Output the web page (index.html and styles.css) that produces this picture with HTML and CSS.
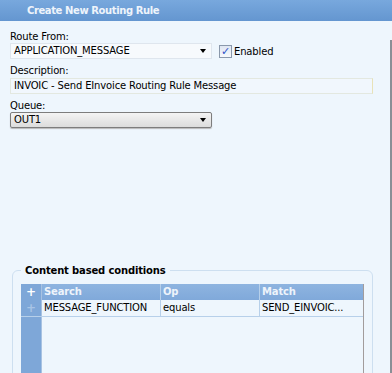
FILE: index.html
```html
<!DOCTYPE html>
<html>
	<head>
		<meta charset="UTF-8">
		<title>Create New Routing Rule</title>
		<link rel="stylesheet" href="styles.css">
	</head>
	<body>
		<div class="dialog">
			<div class="title-bar">Create New Routing Rule</div>
			<div class="form">
				<div class="field-label">Route From:</div>
				<div class="row">
					<div class="combo">APPLICATION_MESSAGE<span class="arrow"></span></div>
					<label class="check"><span class="box">&#10003;</span>Enabled</label>
				</div>
				<div class="field-label">Description:</div>
				<div class="text-input">INVOIC - Send EInvoice Routing Rule Message</div>
				<div class="field-label">Queue:</div>
				<div class="combo combo-button">OUT1<span class="arrow"></span></div>
			</div>
			<fieldset class="conditions">
				<legend>Content based conditions</legend>
				<div class="grid">
					<div class="grid-head">
						<div class="gutter">+</div>
						<div class="col col-search">Search</div>
						<div class="col col-op">Op</div>
						<div class="col col-match">Match</div>
					</div>
					<div class="grid-row">
						<div class="gutter">+</div>
						<div class="col col-search">MESSAGE_FUNCTION</div>
						<div class="col col-op">equals</div>
						<div class="col col-match">SEND_EINVOIC...</div>
					</div>
					<div class="grid-rest">
						<div class="gutter"></div>
					</div>
				</div>
			</fieldset>
		</div>
	</body>
</html>
```

FILE: styles.css
```css
html, body {
	margin: 0;
	height: 100%;
	overflow: hidden;
}
body {
	background-color: #eef6fd;
	font: 10px "DejaVu Sans", Verdana, sans-serif;
	letter-spacing: -0.15px;
	color: #000;
}
.dialog {
	height: 100%;
	background: linear-gradient(#8a8f96, #8a8f96) no-repeat right 0 top 40px / 2px 100%;
}
.title-bar {
	height: 21px;
	line-height: 21px;
	padding-left: 27px;
	background: linear-gradient(#78a8dd, #6496d0);
	color: #eef4fb;
	font-weight: bold;
	letter-spacing: -0.4px;
}
.form {
	padding: 10px 19px 0 10px;
}
.field-label {
	height: 12px;
	line-height: 12px;
}
.row {
	display: flex;
	align-items: center;
	gap: 7px;
}
.row + .field-label {
	margin-top: 6px;
}
.combo {
	position: relative;
	width: 202px;
	height: 16px;
	line-height: 14px;
	padding-left: 3px;
	box-sizing: border-box;
	background-color: #f7fafd;
	border: 1px solid #dfe6ee;
}
.combo .arrow {
	position: absolute;
	right: 5px;
	top: 5px;
	border-left: 3px solid transparent;
	border-right: 3px solid transparent;
	border-top: 4px solid #000;
}
.combo-button {
	background: linear-gradient(#f4f4f4, #dcdcdc);
	border: 1px solid #7d7d7d;
	border-radius: 2px;
	box-shadow: 0 1px 1px #b8b8b8;
}
.check {
	display: flex;
	align-items: center;
	gap: 2px;
}
.box {
	width: 11px;
	height: 11px;
	line-height: 11px;
	border: 1px solid #8a98ab;
	background: linear-gradient(#dfe6f2, #f7f9fc);
	color: #2f55c8;
	font-size: 11px;
	font-weight: bold;
	text-align: center;
}
.text-input {
	height: 14px;
	line-height: 14px;
	padding-left: 3px;
	margin: 1px 0 6px;
	background-color: #f1f7fd;
	border: 1px solid #e3e8e0;
	border-right-color: #e8e2b8;
}
.conditions {
	margin: 137px 19px 0 12px;
	padding: 8px 8px 0 8px;
	height: 120px;
	border: 1px solid #cddff0;
	border-radius: 6px;
}
.conditions legend {
	padding: 0 4px;
	font-weight: bold;
}
.grid {
	height: 100%;
	border-right: 1px solid #a29c9c;
	display: flex;
	flex-direction: column;
}
.grid-head, .grid-row {
	display: flex;
	height: 16px;
	line-height: 16px;
}
.grid-head {
	background: linear-gradient(#8eb4e0, #80a9da);
	color: #eef4fb;
	font-weight: bold;
}
.grid-row {
	border-bottom: 1px solid #b7d0ea;
}
.gutter {
	width: 20px;
	flex-shrink: 0;
	background-color: #7ea7d8;
	border-right: 1px solid #a7c2e2;
	text-align: center;
	color: #fff;
	font-weight: bold;
	font-size: 12px;
}
.grid-row .gutter {
	color: #a8c4e6;
}
.col {
	padding-left: 2px;
	border-right: 1px solid #b7d0ea;
	white-space: nowrap;
	overflow: hidden;
}
.col-search {
	width: 116px;
}
.col-op {
	width: 96px;
}
.col-match {
	flex: 1;
	border-right: none;
}
.grid-rest {
	flex: 1;
	display: flex;
}
```
